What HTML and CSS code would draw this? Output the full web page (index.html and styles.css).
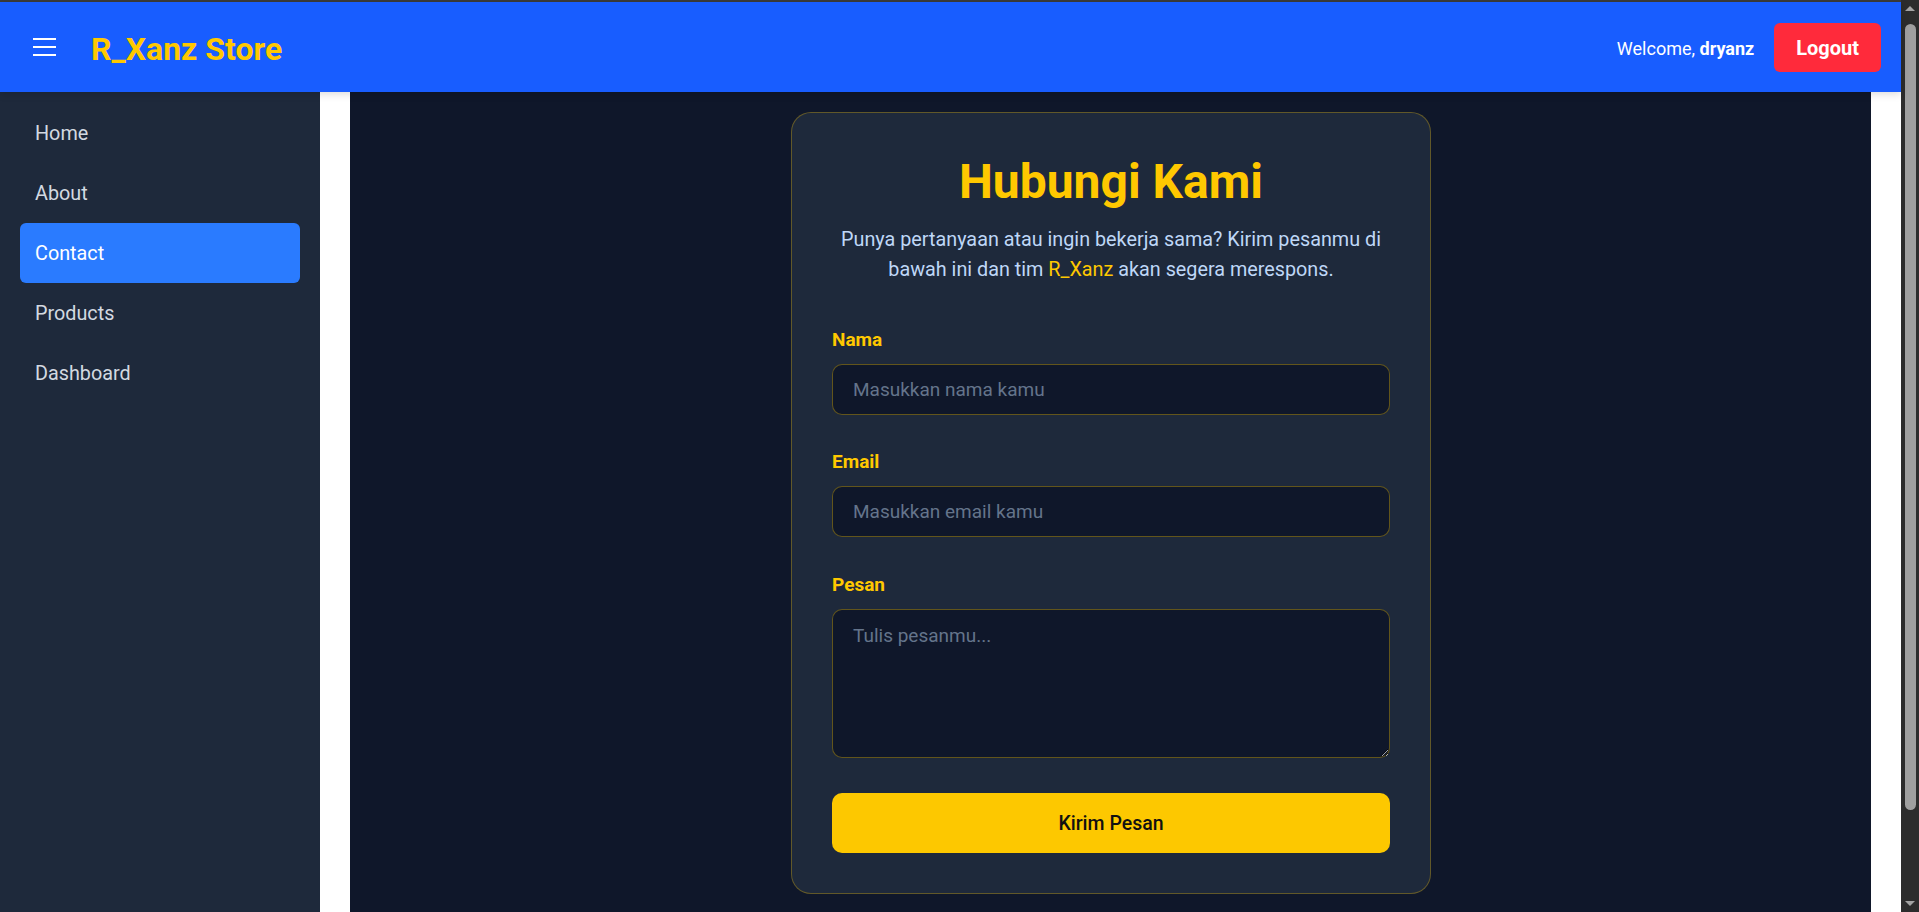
FILE: index.html
```html
<!DOCTYPE html>
<html lang="id">
<head>
<meta charset="utf-8">
<title>Hubungi Kami - R_Xanz Store</title>
<link rel="stylesheet" href="styles.css">
</head>
<body>
<div class="app">
  <header class="topbar">
    <div class="topbar-left">
      <button class="menu-btn" aria-label="Menu">
        <svg width="23" height="18" viewBox="0 0 23 18" aria-hidden="true"><path d="M0 1h23M0 9h23M0 17h23" stroke="#ffffff" stroke-width="2" fill="none"/></svg>
      </button>
      <span class="logo">R_Xanz Store</span>
    </div>
    <div class="topbar-right">
      <span class="welcome">Welcome, <b>dryanz</b></span>
      <button class="logout">Logout</button>
    </div>
  </header>
  <div class="layout">
    <aside class="sidebar">
      <nav class="nav">
        <a class="nav-item" href="#">Home</a>
        <a class="nav-item" href="#">About</a>
        <a class="nav-item active" href="#">Contact</a>
        <a class="nav-item" href="#">Products</a>
        <a class="nav-item" href="#">Dashboard</a>
      </nav>
    </aside>
    <main class="main">
      <div class="content">
        <section class="card">
          <h1 class="card-title">Hubungi Kami</h1>
          <p class="card-desc">Punya pertanyaan atau ingin bekerja sama? Kirim pesanmu di bawah ini dan tim <span class="brand">R_Xanz</span> akan segera merespons.</p>
          <form class="form">
            <div class="field">
              <label class="field-label" for="nama">Nama</label>
              <input class="field-input" id="nama" type="text" placeholder="Masukkan nama kamu">
            </div>
            <div class="field">
              <label class="field-label" for="email">Email</label>
              <input class="field-input" id="email" type="email" placeholder="Masukkan email kamu">
            </div>
            <div class="field">
              <label class="field-label" for="pesan">Pesan</label>
              <textarea class="field-input field-textarea" id="pesan" placeholder="Tulis pesanmu..."></textarea>
            </div>
            <button class="submit" type="button">Kirim Pesan</button>
          </form>
        </section>
      </div>
    </main>
  </div>
</div>
<div class="scrollbar" aria-hidden="true">
  <div class="sb-btn"><span class="sb-up"></span></div>
  <div class="sb-track"><div class="sb-thumb"></div></div>
  <div class="sb-btn"><span class="sb-down"></span></div>
</div>
</body>
</html>
```

FILE: styles.css
```css
* {
  box-sizing: border-box;
}

html,
body {
  margin: 0;
  height: 100%;
}

body {
  display: flex;
  overflow: hidden;
  background: #ffffff;
  font-family: Roboto, "Liberation Sans", Arial, sans-serif;
}

.app {
  flex: 1;
  min-width: 0;
  height: 100vh;
  display: flex;
  flex-direction: column;
  border-top: 2px solid #3b3b3b;
}

/* ---------- top bar ---------- */
.topbar {
  flex: none;
  height: 90px;
  background: #185dff;
  display: flex;
  align-items: center;
  justify-content: space-between;
  padding: 0 20px 0 33px;
  box-shadow: 0 2px 8px rgba(0, 0, 0, 0.15);
  position: relative;
  z-index: 1;
}

.topbar-left {
  display: flex;
  align-items: center;
}

.menu-btn {
  display: flex;
  padding: 0;
  margin: 0 35px 0 0;
  border: none;
  background: none;
}

.logo {
  font-size: 32px;
  font-weight: 700;
  color: #ffc800;
  margin-top: 3px;
}

.topbar-right {
  display: flex;
  align-items: center;
  gap: 20px;
}

.welcome {
  font-size: 18px;
  color: #ffffff;
  margin-top: 2px;
}

.welcome b {
  font-weight: 700;
}

.logout {
  height: 49px;
  padding: 2px 22px 0;
  border: none;
  border-radius: 6px;
  background: #ff2a3b;
  color: #ffffff;
  font-family: inherit;
  font-size: 20px;
  font-weight: 700;
}

/* ---------- layout ---------- */
.layout {
  flex: 1;
  min-height: 0;
  display: flex;
}

.sidebar {
  flex: none;
  width: 320px;
  background: #1e293b;
  padding: 11px 20px;
}

.nav {
  display: flex;
  flex-direction: column;
}

.nav-item {
  height: 60px;
  display: flex;
  align-items: center;
  padding: 0 15px;
  border-radius: 6px;
  color: #d3d9e1;
  font-size: 19.8px;
  text-decoration: none;
}

.nav-item.active {
  background: #2a7bff;
  color: #ffffff;
}

.main {
  flex: 1;
  min-width: 0;
  display: flex;
  background: #ffffff;
  padding: 0 30px;
}

.content {
  flex: 1;
  background: #0f172a;
  padding: 20px 0 0 1px;
}

/* ---------- card ---------- */
.card {
  width: 640px;
  margin: 0 auto;
  background: #1e293b;
  border: 1px solid rgba(255, 200, 0, 0.3);
  border-radius: 20px;
  padding: 40px;
}

.card-title {
  margin: 0 0 14px;
  font-size: 48px;
  line-height: 1.2;
  font-weight: 700;
  color: #ffc800;
  text-align: center;
}

.card-desc {
  margin: 0 0 43px;
  font-size: 19.8px;
  line-height: 30px;
  color: #bfd7f7;
  text-align: center;
}

.brand {
  color: #ffc800;
}

.field {
  margin-bottom: 35.5px;
}

.field-label {
  display: block;
  margin-bottom: 13px;
  font-size: 19px;
  font-weight: 700;
  color: #ffc800;
}

.field-input {
  display: block;
  width: 100%;
  height: 51px;
  padding: 0 20px;
  background: #0f172a;
  border: 1px solid rgba(255, 200, 0, 0.35);
  border-radius: 10px;
  color: #ffffff;
  font-family: inherit;
  font-size: 19px;
  outline: none;
}

.field-input::placeholder {
  color: #64748b;
}

.field-textarea {
  height: 149px;
  padding: 14px 20px;
  resize: vertical;
}

.submit {
  display: block;
  width: 100%;
  height: 60px;
  margin-top: 3px;
  border: none;
  border-radius: 10px;
  background: #fdc800;
  color: #111111;
  font-family: inherit;
  font-size: 19.5px;
  font-weight: 500;
}

/* ---------- window scrollbar ---------- */
.scrollbar {
  flex: none;
  width: 18px;
  height: 100vh;
  background: #2c2c2c;
  display: flex;
  flex-direction: column;
}

.sb-btn {
  flex: none;
  height: 17px;
  display: flex;
  align-items: center;
  justify-content: center;
}

.sb-up,
.sb-down {
  width: 0;
  height: 0;
  border-left: 5px solid transparent;
  border-right: 5px solid transparent;
}

.sb-up {
  border-bottom: 5px solid #a3a3a3;
}

.sb-down {
  border-top: 5px solid #a3a3a3;
}

.sb-track {
  flex: 1;
  padding: 7px 3px 0 4px;
}

.sb-thumb {
  height: 786px;
  background: #9f9f9f;
  border-radius: 6px;
}
```
